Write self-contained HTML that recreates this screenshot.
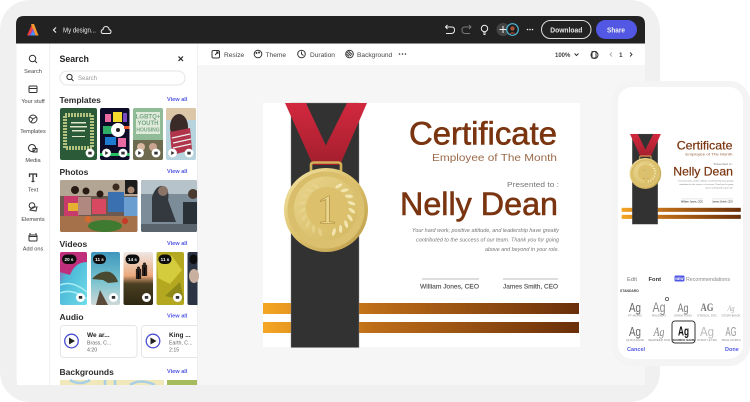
<!DOCTYPE html>
<html><head><meta charset="utf-8"><style>
html,body{margin:0;padding:0;background:#fff;width:750px;height:402px;overflow:hidden}
svg{display:block;filter:blur(.35px)}
text{font-family:"Liberation Sans",sans-serif}
.h{font-size:8.5px;font-weight:bold;fill:#2c2c2c}
.va{font-size:5.6px;fill:#5258e4;font-weight:bold}
.rl{font-size:5.6px;fill:#444;text-anchor:middle}
.tb{font-size:6.6px;fill:#444}
.ic{fill:none;stroke:#333;stroke-width:1}
.wt{fill:none;stroke:#eee;stroke-width:1}
.bd{font-size:4.6px;font-weight:bold;fill:#fff;text-anchor:middle}
.ag{font-size:12.5px;fill:#666;text-anchor:middle}
.lb{font-size:3px;fill:#888;text-anchor:middle}
</style></head><body>
<svg width="750" height="402" viewBox="0 0 750 402" xmlns="http://www.w3.org/2000/svg">
<defs>
<linearGradient id="bar" x1="0" x2="1"><stop offset="0" stop-color="#f5a623"/><stop offset=".35" stop-color="#bd6d18"/><stop offset="1" stop-color="#6a2f0a"/></linearGradient>
<linearGradient id="red" x1="0" x2="0" y1="0" y2="1"><stop offset="0" stop-color="#d2283e"/><stop offset="1" stop-color="#a31f2e"/></linearGradient>
<linearGradient id="gold" x1="0" x2="1" y1="0" y2="1"><stop offset="0" stop-color="#f3e5a6"/><stop offset=".5" stop-color="#dcc06a"/><stop offset="1" stop-color="#bb9a48"/></linearGradient>
<linearGradient id="gold2" x1="0" x2="1" y1="0" y2="1"><stop offset="0" stop-color="#d8bc68"/><stop offset="1" stop-color="#dcc272"/></linearGradient>
<linearGradient id="gold3" x1="0" x2="1" y1="0" y2="1"><stop offset="0" stop-color="#e8d48c"/><stop offset="1" stop-color="#d4b860"/></linearGradient>
<linearGradient id="v1" x1="0" x2="1" y1="0" y2="1"><stop offset="0" stop-color="#c2358a"/><stop offset=".35" stop-color="#4bb8d8"/><stop offset="1" stop-color="#6fdde8"/></linearGradient>
<linearGradient id="v2" x1="0" x2="0" y1="0" y2="1"><stop offset="0" stop-color="#3d96bd"/><stop offset=".55" stop-color="#79c4cf"/><stop offset="1" stop-color="#cfd8d8"/></linearGradient>
<linearGradient id="v3" x1="0" x2="0" y1="0" y2="1"><stop offset="0" stop-color="#efe7e4"/><stop offset=".45" stop-color="#eba87c"/><stop offset=".6" stop-color="#4a3f22"/><stop offset="1" stop-color="#2e2712"/></linearGradient>
<clipPath id="panel"><rect x="50" y="44" width="147" height="341"/></clipPath>
<clipPath id="t1"><rect x="60" y="108" width="37" height="52" rx="2"/></clipPath>
<clipPath id="t2"><rect x="100" y="108" width="29.500" height="52" rx="2"/></clipPath>
<clipPath id="t3"><rect x="133" y="108" width="30" height="52" rx="2"/></clipPath>
<clipPath id="t4"><rect x="166" y="108" width="30" height="52" rx="2"/></clipPath>
<clipPath id="p1"><rect x="60" y="180" width="77.500" height="52" rx="2"/></clipPath>
<clipPath id="p2"><rect x="141" y="180" width="56" height="52" rx="2"/></clipPath>
<clipPath id="v11"><rect x="60" y="252" width="27" height="53" rx="2"/></clipPath>
<clipPath id="v21"><rect x="91" y="252" width="29" height="53" rx="2"/></clipPath>
<clipPath id="v31"><rect x="123.500" y="252" width="29.500" height="53" rx="2"/></clipPath>
<clipPath id="v41"><rect x="156.500" y="252" width="27.500" height="53" rx="2"/></clipPath>
<clipPath id="v51"><rect x="187.500" y="252" width="12" height="53" rx="2"/></clipPath>
<ellipse id="lf" rx="4" ry="1.600"/>
<g id="cert">
<rect x="263" y="103" width="317" height="244" rx="1" fill="#fff"/>
<rect x="263" y="303" width="316" height="11" fill="url(#bar)"/>
<rect x="263" y="322" width="316" height="11" fill="url(#bar)"/>
<rect x="291" y="103" width="68" height="244.500" fill="#323232" stroke="#888" stroke-width=".4"/>
<path d="M347 103H367L340 165H318L327 143Z" fill="url(#red)"/>
<path d="M285 103H306L335 165H313Z" fill="url(#red)"/>
<path d="M311 172V165Q311 162.500 314 162.500H338Q341 162.500 341 165V172" fill="none" stroke="#d0b058" stroke-width="2.600"/>
<circle cx="326" cy="210" r="42" fill="url(#gold)"/>
<circle cx="326" cy="210" r="38.500" fill="url(#gold2)"/>
<circle cx="326" cy="208.500" r="32" fill="url(#gold3)"/>
<circle cx="327" cy="208" r="21" fill="#dcc06c"/>
<g transform="translate(327 208)" fill="#f3e6b0">
<use href="#lf" transform="rotate(-62) translate(25 0) rotate(32)"/>
<use href="#lf" transform="rotate(-45) translate(25 0) rotate(32)"/>
<use href="#lf" transform="rotate(-28) translate(25 0) rotate(32)"/>
<use href="#lf" transform="rotate(-11) translate(25 0) rotate(32)"/>
<use href="#lf" transform="rotate(6) translate(25 0) rotate(32)"/>
<use href="#lf" transform="rotate(23) translate(25 0) rotate(32)"/>
<use href="#lf" transform="rotate(40) translate(25 0) rotate(32)"/>
<use href="#lf" transform="rotate(57) translate(25 0) rotate(32)"/>
<use href="#lf" transform="rotate(74) translate(25 0) rotate(32)"/>
</g>
<g transform="translate(327 208)" fill="#e9d48e" opacity=".8">
<use href="#lf" transform="rotate(242) translate(25 0) rotate(-32)"/>
<use href="#lf" transform="rotate(225) translate(25 0) rotate(-32)"/>
<use href="#lf" transform="rotate(208) translate(25 0) rotate(-32)"/>
<use href="#lf" transform="rotate(191) translate(25 0) rotate(-32)"/>
<use href="#lf" transform="rotate(174) translate(25 0) rotate(-32)"/>
<use href="#lf" transform="rotate(157) translate(25 0) rotate(-32)"/>
<use href="#lf" transform="rotate(140) translate(25 0) rotate(-32)"/>
<use href="#lf" transform="rotate(123) translate(25 0) rotate(-32)"/>
<use href="#lf" transform="rotate(106) translate(25 0) rotate(-32)"/>
</g>
<text x="327" y="223" text-anchor="middle" style="font-family:'Liberation Serif',serif;font-size:41px" fill="#e8d48c" stroke="#ad8c3c" stroke-width=".6">1</text>
<g fill="#7a3510" stroke="#7a3510">
<text x="409" y="144.500" font-size="32" stroke-width=".6" textLength="148" lengthAdjust="spacingAndGlyphs">Certificate</text>
<text x="400" y="215" font-size="32" stroke-width=".6" textLength="158" lengthAdjust="spacingAndGlyphs">Nelly Dean</text>
</g>
<text x="432" y="161" font-size="10.500" textLength="125" lengthAdjust="spacingAndGlyphs" fill="#9a6a4a">Employee of The Month</text>
<text x="507" y="187" font-size="7.500" textLength="52" lengthAdjust="spacingAndGlyphs" fill="#777">Presented to :</text>
<g font-size="5.600" font-style="italic" fill="#777">
<text x="412" y="232" textLength="147" lengthAdjust="spacingAndGlyphs">Your hard work, positive attitude, and leadership have greatly</text>
<text x="416" y="241.500" textLength="143" lengthAdjust="spacingAndGlyphs">contributed to the success of our team. Thank you for going</text>
<text x="485" y="251" textLength="74" lengthAdjust="spacingAndGlyphs">above and beyond in your role.</text>
</g>
<rect x="422" y="278.500" width="57" height="1" fill="#bbb"/>
<rect x="503" y="278.500" width="55" height="1" fill="#bbb"/>
<g font-size="6" fill="#555" stroke="#555" stroke-width=".15">
<text x="420" y="288.500" textLength="59" lengthAdjust="spacingAndGlyphs">William Jones, CEO</text>
<text x="503" y="288.500" textLength="55" lengthAdjust="spacingAndGlyphs">James Smith, CEO</text>
</g>
</g>
</defs>

<rect width="750" height="402" fill="#fff"/>
<rect x="0" y="0" width="660" height="402" rx="30" fill="#f0f0f0"/>

<!-- app -->
<path d="M16 44V24Q16 16 24 16H637Q645 16 645 24V44Z" fill="#222"/>
<path d="M16 43.500H645V385H24Q16 385 16 377Z" fill="#f6f6f6"/>
<rect x="17" y="44" width="180" height="341" fill="#fff"/>
<path d="M17 44H50V385H24Q17 385 17 378Z" fill="#fff"/>
<rect x="49.500" y="44" width=".6" height="341" fill="#e6e6e6"/>
<rect x="197" y="44" width="448" height="21" fill="#fff"/>
<rect x="197" y="44" width=".6" height="341" fill="#e9e9e9"/>

<!-- top bar -->
<path d="M32 24L27 35.500H31L33.500 29Z" fill="#ef3f3a"/>
<path d="M31 24H34L38.500 35.500H35Z" fill="#f39a2e"/>
<path d="M30.500 33.500L33 28.500L35.500 35.500H28.500Z" fill="#8a54e8"/>
<path d="M31 35.500L33 31L35 35.500Z" fill="#3a9df0"/>
<path d="M56 27.500L53.500 30L56 32.500" fill="none" stroke="#eee" stroke-width="1.200"/>
<text x="63" y="32.500" font-size="7.200" fill="#e8e8e8" textLength="33" lengthAdjust="spacingAndGlyphs">My design...</text>
<path d="M103 33.500H109.500Q111 33.500 111 31.500Q111 30 109.300 29.800Q108.500 26.500 106 26.500Q103.500 26.500 103 29.500Q101.200 30 101.200 31.600Q101.200 33.500 103 33.500Z" class="wt"/>
<path d="M445.500 27H452Q454.500 27 454.500 30Q454.500 33.500 451 33.500H446M447.500 25L445.500 27L447.500 29" class="wt"/>
<path d="M471 27H465Q462 27 462 30Q462 33.500 465.500 33.500H470M469 25L471 27L469 29" fill="none" stroke="#777" stroke-width="1"/>
<circle cx="484.500" cy="28.500" r="3.200" class="wt"/><path d="M483 33H486M483.500 34.500H485.500" class="wt"/>
<circle cx="503" cy="29.500" r="6.500" fill="#444"/><path d="M499.500 29.500H506.500M503 26V33" stroke="#eee" stroke-width="1" fill="none"/>
<circle cx="512.500" cy="29.500" r="5.800" fill="#1c1c1c" stroke="#4fb8d6" stroke-width="1.200"/><circle cx="512.500" cy="28.500" r="2.200" fill="#a6523a"/><path d="M509 34Q512.500 30 516 34Z" fill="#7a3a2a"/>
<g fill="#eee"><circle cx="527.500" cy="29.500" r=".8"/><circle cx="530" cy="29.500" r=".8"/><circle cx="532.500" cy="29.500" r=".8"/></g>
<rect x="541.500" y="20.500" width="49.500" height="18" rx="9" fill="none" stroke="#ddd" stroke-width="1"/>
<text x="566.300" y="32.300" font-size="7.500" font-weight="bold" fill="#e8e8e8" text-anchor="middle" textLength="32" lengthAdjust="spacingAndGlyphs">Download</text>
<rect x="596" y="20" width="41" height="19" rx="9.500" fill="#5258e4"/>
<text x="616" y="32.300" font-size="7.500" font-weight="bold" fill="#eee" text-anchor="middle" textLength="18" lengthAdjust="spacingAndGlyphs">Share</text>

<!-- left rail -->
<g class="ic">
<circle cx="32.500" cy="58.500" r="3.200"/><path d="M35 61L37 63"/>
<path d="M29 91.500V87Q29 86 30 86H36Q37 86 37 87V91.500Q37 92.500 36 92.500H30Q29 92.500 29 91.500ZM29 88.500H37"/>
<circle cx="33" cy="119" r="4"/><path d="M30 117L33 119L31 122M33 119L36 117"/>
<circle cx="32" cy="148" r="3.500"/><rect x="33" y="148.500" width="4" height="3.500"/>
<path d="M29.500 177V174H36.500V177M33 174V181.500M31.500 181.500H34.500" stroke-width="1.300"/>
<circle cx="32" cy="205.500" r="2.800"/><path d="M33 207L37 207L36 211L30 210Z"/>
<rect x="29" y="235" width="8" height="6" rx="1"/><path d="M30 233V235M36 233V235M29 236.500H37"/>
</g>
<g class="rl">
<text x="33" y="73">Search</text>
<text x="33" y="103">Your stuff</text>
<text x="33" y="133">Templates</text>
<text x="33" y="162">Media</text>
<text x="33" y="191.500">Text</text>
<text x="33" y="221">Elements</text>
<text x="33" y="250.500">Add ons</text>
</g>

<!-- panel -->
<text x="59.500" y="62" font-size="8.800" font-weight="bold" fill="#222">Search</text>
<path d="M178.500 56.500L183 61M183 56.500L178.500 61" stroke="#222" stroke-width="1.200" fill="none"/>
<rect x="60" y="71" width="125" height="14" rx="7" fill="#fff" stroke="#e4e4e4" stroke-width="1"/>
<circle cx="69.500" cy="77" r="2.600" fill="none" stroke="#333" stroke-width="1"/><path d="M71.500 79L73.500 81" stroke="#333" stroke-width="1"/>
<text x="78" y="80" font-size="6" fill="#999">Search</text>
<text class="h" x="59.500" y="103">Templates</text><text class="va" x="167" y="101">View all</text>
<text class="h" x="59.500" y="175">Photos</text><text class="va" x="167" y="173">View all</text>
<text class="h" x="59.500" y="247">Videos</text><text class="va" x="167" y="245">View all</text>
<text class="h" x="59.500" y="320">Audio</text><text class="va" x="167" y="317.500">View all</text>
<text class="h" x="59.500" y="375">Backgrounds</text><text class="va" x="167" y="373">View all</text>

<g clip-path="url(#t1)"><rect x="60" y="108" width="37" height="52" fill="#2a5a38"/>
<rect x="65" y="115" width="27" height="33" fill="none" stroke="#b4c480" stroke-width="4" stroke-dasharray="2 1"/>
<g fill="#dfe7c8"><rect x="71" y="122" width="15" height="1.500"/><rect x="70" y="126" width="17" height="1.500"/><rect x="72" y="130" width="13" height="1.500"/><rect x="72" y="136" width="13" height="1"/></g></g>
<g clip-path="url(#t2)"><rect x="100" y="108" width="30" height="52" fill="#0c0c28"/>
<rect x="105" y="114" width="6" height="8" fill="#e86aa0"/><rect x="113" y="112" width="9" height="10" fill="#f2d92e"/><rect x="123" y="113" width="4" height="9" fill="#7a4ac0"/>
<rect x="103" y="126" width="9" height="8" fill="#2fae68"/><circle cx="118" cy="130" r="7" fill="#fff"/><circle cx="118" cy="130" r="2" fill="#222"/><rect x="124" y="126" width="6" height="3" fill="#ee5a30"/>
<rect x="105" y="137" width="11" height="8" fill="#1e7ad0"/><rect x="118" y="138" width="8" height="9" fill="#e86aa0"/><rect x="100" y="153" width="30" height="3" fill="#26c060"/></g>
<g clip-path="url(#t3)"><rect x="133" y="108" width="30" height="52" fill="#8fbb96"/><rect x="136" y="112" width="24" height="22" fill="#dfeadb"/>
<text x="148" y="118.500" font-size="6" font-weight="bold" fill="#78a884" text-anchor="middle">LGBTQ+</text><text x="148" y="125" font-size="6" font-weight="bold" fill="#78a884" text-anchor="middle">YOUTH</text><text x="148" y="131.500" font-size="5" font-weight="bold" fill="#78a884" text-anchor="middle">HOUSING</text>
<rect x="133" y="140" width="30" height="20" fill="#6e6a50"/><circle cx="141" cy="147" r="4" fill="#d8b8a0"/><circle cx="153" cy="147" r="4" fill="#c8a490"/></g>
<g clip-path="url(#t4)"><rect x="166" y="108" width="30" height="52" fill="#b7d3de"/><rect x="166" y="108" width="30" height="12" fill="#dcc6a8"/><ellipse cx="179" cy="127" rx="9" ry="13" fill="#3a2a28"/><path d="M170 132L190 128L192 150L172 155Z" fill="#b0344a"/><path d="M172 138L190 134M173 143L191 139M173 148L191 144" stroke="#eee" stroke-width="1.200"/></g>
<g id="btns">
<g fill="#fff"><circle cx="90" cy="153" r="4.400"/><circle cx="106.500" cy="153" r="4.400"/><circle cx="123" cy="153" r="4.400"/><circle cx="139.500" cy="153" r="4.400"/><circle cx="156" cy="153" r="4.400"/><circle cx="172.500" cy="153" r="4.400"/><circle cx="189" cy="153" r="4.400"/></g>
<g fill="#333"><rect x="88.300" y="151.700" width="3.400" height="2.800"/><rect x="121.300" y="151.700" width="3.400" height="2.800"/><rect x="154.300" y="151.700" width="3.400" height="2.800"/><rect x="187.300" y="151.700" width="3.400" height="2.800"/><path d="M105.200 151L108.500 153L105.200 155ZM138.200 151L141.500 153L138.200 155ZM171.200 151L174.500 153L171.200 155Z"/></g>
</g>

<g clip-path="url(#p1)"><rect x="60" y="180" width="78" height="52" fill="#6c5a50"/><rect x="60" y="180" width="78" height="16" fill="#b2a594"/><rect x="125" y="180" width="13" height="14" fill="#1c1c1c"/>
<circle cx="75" cy="190" r="4" fill="#2a1a14"/><rect x="64" y="196" width="15" height="20" fill="#c83a6a"/><rect x="68" y="203" width="10" height="8" fill="#e6b030"/>
<circle cx="86" cy="191" r="3.500" fill="#2a1a14"/><rect x="78" y="197" width="13" height="18" fill="#b08880"/>
<circle cx="100" cy="194" r="3.500" fill="#2a1a14"/><rect x="92" y="199" width="14" height="15" fill="#d84860"/>
<circle cx="116" cy="187" r="3.500" fill="#3a2a20"/><rect x="108" y="192" width="16" height="20" fill="#3a70b0"/>
<circle cx="131" cy="190" r="3.500" fill="#a88870"/><rect x="124" y="197" width="14" height="20" fill="#6a9ed0"/>
<rect x="60" y="216" width="78" height="16" fill="#a4714a"/><ellipse cx="105" cy="226" rx="17" ry="6" fill="#3e7a30"/><circle cx="125" cy="221" r="3" fill="#c83a28"/><circle cx="88" cy="219" r="3" fill="#d86a30"/></g>
<g clip-path="url(#p2)"><rect x="141" y="180" width="56" height="52" fill="#7c8c98"/><rect x="141" y="180" width="56" height="14" fill="#b7c3cb"/><path d="M152 197Q156 185 163 186Q170 189 168 200L176 222H152Z" fill="#33393f"/><circle cx="163" cy="191" r="5" fill="#8a7468"/><circle cx="193" cy="194" r="5" fill="#4a3a30"/><rect x="183" y="202" width="14" height="30" fill="#2a3238"/><rect x="141" y="224" width="56" height="8" fill="#59646c"/></g>

<g clip-path="url(#v11)"><rect x="60" y="252" width="27" height="53" fill="url(#v1)"/><path d="M60 252H87V262Q75 262 70 275L60 272Z" fill="#c02f7c"/><path d="M60 285Q72 280 87 292M60 293Q72 288 87 299" stroke="#a8ecf4" stroke-width="1.500" fill="none"/></g>
<g clip-path="url(#v21)"><rect x="91" y="252" width="29" height="53" fill="url(#v2)"/><path d="M92 279Q100 270 110 272Q116 275 118 282L108 283L103 280Z" fill="#4a4a32"/><path d="M96 305L100 290L108 305Z" fill="#5a4a3a"/></g>
<g clip-path="url(#v31)"><rect x="123.500" y="252" width="30" height="53" fill="url(#v3)"/><path d="M137 279V270H140V279M143 276V266H146V276" stroke="#2a201a" stroke-width="2.200"/><circle cx="138.500" cy="268" r="1.500" fill="#2a201a"/><circle cx="144.500" cy="264" r="1.500" fill="#2a201a"/></g>
<g clip-path="url(#v41)"><rect x="156.500" y="252" width="28" height="53" fill="#b3a820"/><path d="M157 262L172 256L182 270L170 284L158 278Z" fill="#d4cc3c"/><path d="M165 296L180 282L184 300Z" fill="#8d8818"/></g>
<g clip-path="url(#v51)"><rect x="187.500" y="252" width="10" height="53" fill="#2a3444"/><ellipse cx="194" cy="276" rx="5" ry="7" fill="#c8b0a0"/></g>
<g fill="#0d0d0d"><rect x="62" y="254.500" width="14.500" height="9.500" rx="4.700"/><rect x="93" y="254.500" width="13" height="9.500" rx="4.700"/><rect x="125.500" y="254.500" width="14" height="9.500" rx="4.700"/><rect x="158.500" y="254.500" width="13" height="9.500" rx="4.700"/><rect x="189.500" y="254.500" width="8" height="9.500" rx="4"/></g>
<g class="bd"><text x="69" y="261">20 s</text><text x="99.500" y="261">11 s</text><text x="132.500" y="261">14 s</text><text x="165" y="261">11 s</text></g>
<g fill="#fff"><circle cx="80.500" cy="297.500" r="4.500"/><circle cx="113.500" cy="297.500" r="4.500"/><circle cx="146.500" cy="297.500" r="4.500"/><circle cx="177.500" cy="297.500" r="4.500"/></g>
<g fill="#333"><rect x="78.800" y="296" width="3.400" height="2.800"/><rect x="111.800" y="296" width="3.400" height="2.800"/><rect x="144.800" y="296" width="3.400" height="2.800"/><rect x="175.800" y="296" width="3.400" height="2.800"/></g>

<g clip-path="url(#panel)">
<rect x="60.500" y="325.500" width="76.500" height="32" rx="3" fill="#fff" stroke="#e6e6e6"/>
<rect x="141.500" y="325.500" width="76.500" height="32" rx="3" fill="#fff" stroke="#e6e6e6"/>
<circle cx="71.500" cy="341" r="6.800" fill="none" stroke="#4b50d0" stroke-width="1.300"/><path d="M69 337.500L75 341L69 344.500Z" fill="#222"/>
<circle cx="153" cy="341" r="6.800" fill="none" stroke="#4b50d0" stroke-width="1.300"/><path d="M150.500 337.500L156.500 341L150.500 344.500Z" fill="#222"/>
<text x="87" y="337" font-size="6.500" font-weight="bold" fill="#222">We ar...</text>
<text x="87" y="344.500" font-size="5.200" fill="#666">Brass, C...</text>
<text x="87" y="351.500" font-size="5.200" fill="#666">4:20</text>
<text x="169" y="337" font-size="6.500" font-weight="bold" fill="#222">King ...</text>
<text x="169" y="344.500" font-size="5.200" fill="#666">Earth, C...</text>
<text x="169" y="351.500" font-size="5.200" fill="#666">2:15</text>
<rect x="60" y="380" width="104" height="8" fill="#f0e8b8"/>
<path d="M70 380Q80 386 90 380M105 380V386M115 380V386M130 385Q140 378 155 385" stroke="#a9cfe6" stroke-width="2.500" fill="none"/>
<rect x="167" y="380" width="30" height="8" fill="#a6bb5e"/>
</g>
<rect x="17" y="385" width="180" height="6" fill="#f0f0f0"/>

<!-- toolbar -->
<g class="ic">
<rect x="212" y="50.500" width="7.500" height="7.500" rx="1.500"/><path d="M215 55L218 52M216 52H218V54"/>
<circle cx="258" cy="54" r="3.800"/><circle cx="256.500" cy="53" r=".5"/><circle cx="259" cy="52.500" r=".5"/>
<circle cx="301.500" cy="54" r="3.800"/><path d="M301.500 51.500V54L303.500 55.500"/>
<circle cx="349.500" cy="54" r="3.800"/><path d="M347 52L351 56M348.500 51L352 54.500M346.500 54L349 56.500"/>
<path d="M592 51.500H596V58H592Z"/><circle cx="594.500" cy="55" r="3.500"/>
</g>
<g class="tb">
<text x="224" y="56.800">Resize</text>
<text x="265.500" y="56.800">Theme</text>
<text x="310" y="56.800">Duration</text>
<text x="357" y="56.800">Background</text>
</g>
<g fill="#333"><circle cx="399.500" cy="54" r=".8"/><circle cx="402.500" cy="54" r=".8"/><circle cx="405.500" cy="54" r=".8"/></g>
<text x="555" y="57" font-size="6" font-weight="bold" fill="#444">100%</text>
<path d="M574.500 53.500L576.500 55.500L578.500 53.500" class="ic"/>
<path d="M612 52.500L610 54.500L612 56.500" fill="none" stroke="#aaa" stroke-width=".9"/>
<text x="620.800" y="57" font-size="6" font-weight="bold" fill="#333" text-anchor="middle">1</text>
<path d="M630 52.500L632 54.500L630 56.500" fill="none" stroke="#333" stroke-width=".9"/>

<use href="#cert"/>

<!-- phone -->
<rect x="612" y="81" width="138" height="285" rx="20" fill="#f4f4f4"/>
<rect x="618" y="87" width="125" height="272" rx="14" fill="#fff"/>
<use href="#cert" transform="translate(522.500 96) scale(.377 .369)"/>
<g>
<text x="627" y="281" font-size="5.800" fill="#777">Edit</text>
<text x="648.500" y="281" font-size="5.800" font-weight="bold" fill="#333">Font</text>
<rect x="674.500" y="275.500" width="10" height="6" rx="1.200" fill="#5258e4"/><text x="679.500" y="280" font-size="3.500" font-weight="bold" fill="#fff" text-anchor="middle">NEW</text>
<text x="686" y="281" font-size="5.800" fill="#888" textLength="44" lengthAdjust="spacingAndGlyphs">Recommendations</text>
<text x="620" y="292" font-size="3.400" font-weight="bold" fill="#444">STANDARD</text>
<text class="ag" x="635" y="312" textLength="12" lengthAdjust="spacingAndGlyphs">Ag</text>
<text class="ag" x="659" y="312" textLength="13" lengthAdjust="spacingAndGlyphs" style="fill:#888;font-size:13.500px">Ag</text>
<text class="ag" x="683" y="312" textLength="11" lengthAdjust="spacingAndGlyphs" style="fill:#777;font-size:12px">Ag</text>
<text class="ag" x="707" y="311" textLength="13" lengthAdjust="spacingAndGlyphs" style="font-family:'Liberation Serif',serif;font-weight:bold;fill:#777;font-size:12px">AG</text>
<text class="ag" x="731" y="311" textLength="7" lengthAdjust="spacingAndGlyphs" style="font-family:'Liberation Serif',serif;font-style:italic;fill:#aaa;font-size:8px">Ag</text>
<text class="ag" x="635" y="336" textLength="12" lengthAdjust="spacingAndGlyphs">Ag</text>
<text class="ag" x="659" y="336" textLength="11" lengthAdjust="spacingAndGlyphs" style="font-family:'Liberation Serif',serif;font-style:italic;fill:#888">Ag</text>
<rect x="672" y="321" width="23" height="22" rx="3" fill="#fff" stroke="#333" stroke-width="1"/>
<text class="ag" x="683.500" y="335.500" textLength="11" lengthAdjust="spacingAndGlyphs" style="font-weight:bold;fill:#111">Ag</text>
<text class="ag" x="707" y="336" textLength="14" lengthAdjust="spacingAndGlyphs" style="fill:#bbb">Ag</text>
<text class="ag" x="731" y="336" textLength="11" lengthAdjust="spacingAndGlyphs" style="fill:#999">AG</text>
<g class="lb"><text x="635" y="316.500">PT MONO</text><text x="659" y="316.500">RALEWAY</text><text x="683" y="316.500">GRAVITONO</text><text x="707" y="316.500">STENCIL STD</text><text x="731" y="316.500">STORYBOOK</text>
<text x="635" y="341">QUICKSAND</text><text x="659" y="341">SEAWEED SCR</text><text x="683.500" y="341" style="fill:#222;font-weight:bold">SOURCE SANS</text><text x="707" y="341">STRAT ULTRA</text><text x="731" y="341">TRUE NORTH</text></g>
<circle cx="667" cy="299" r="1.600" fill="none" stroke="#555" stroke-width=".8"/>
<text x="627" y="351" font-size="5.500" font-weight="bold" fill="#5258e4">Cancel</text>
<text x="725" y="351" font-size="5.500" font-weight="bold" fill="#5258e4">Done</text>
</g>
</svg>
</body></html>
